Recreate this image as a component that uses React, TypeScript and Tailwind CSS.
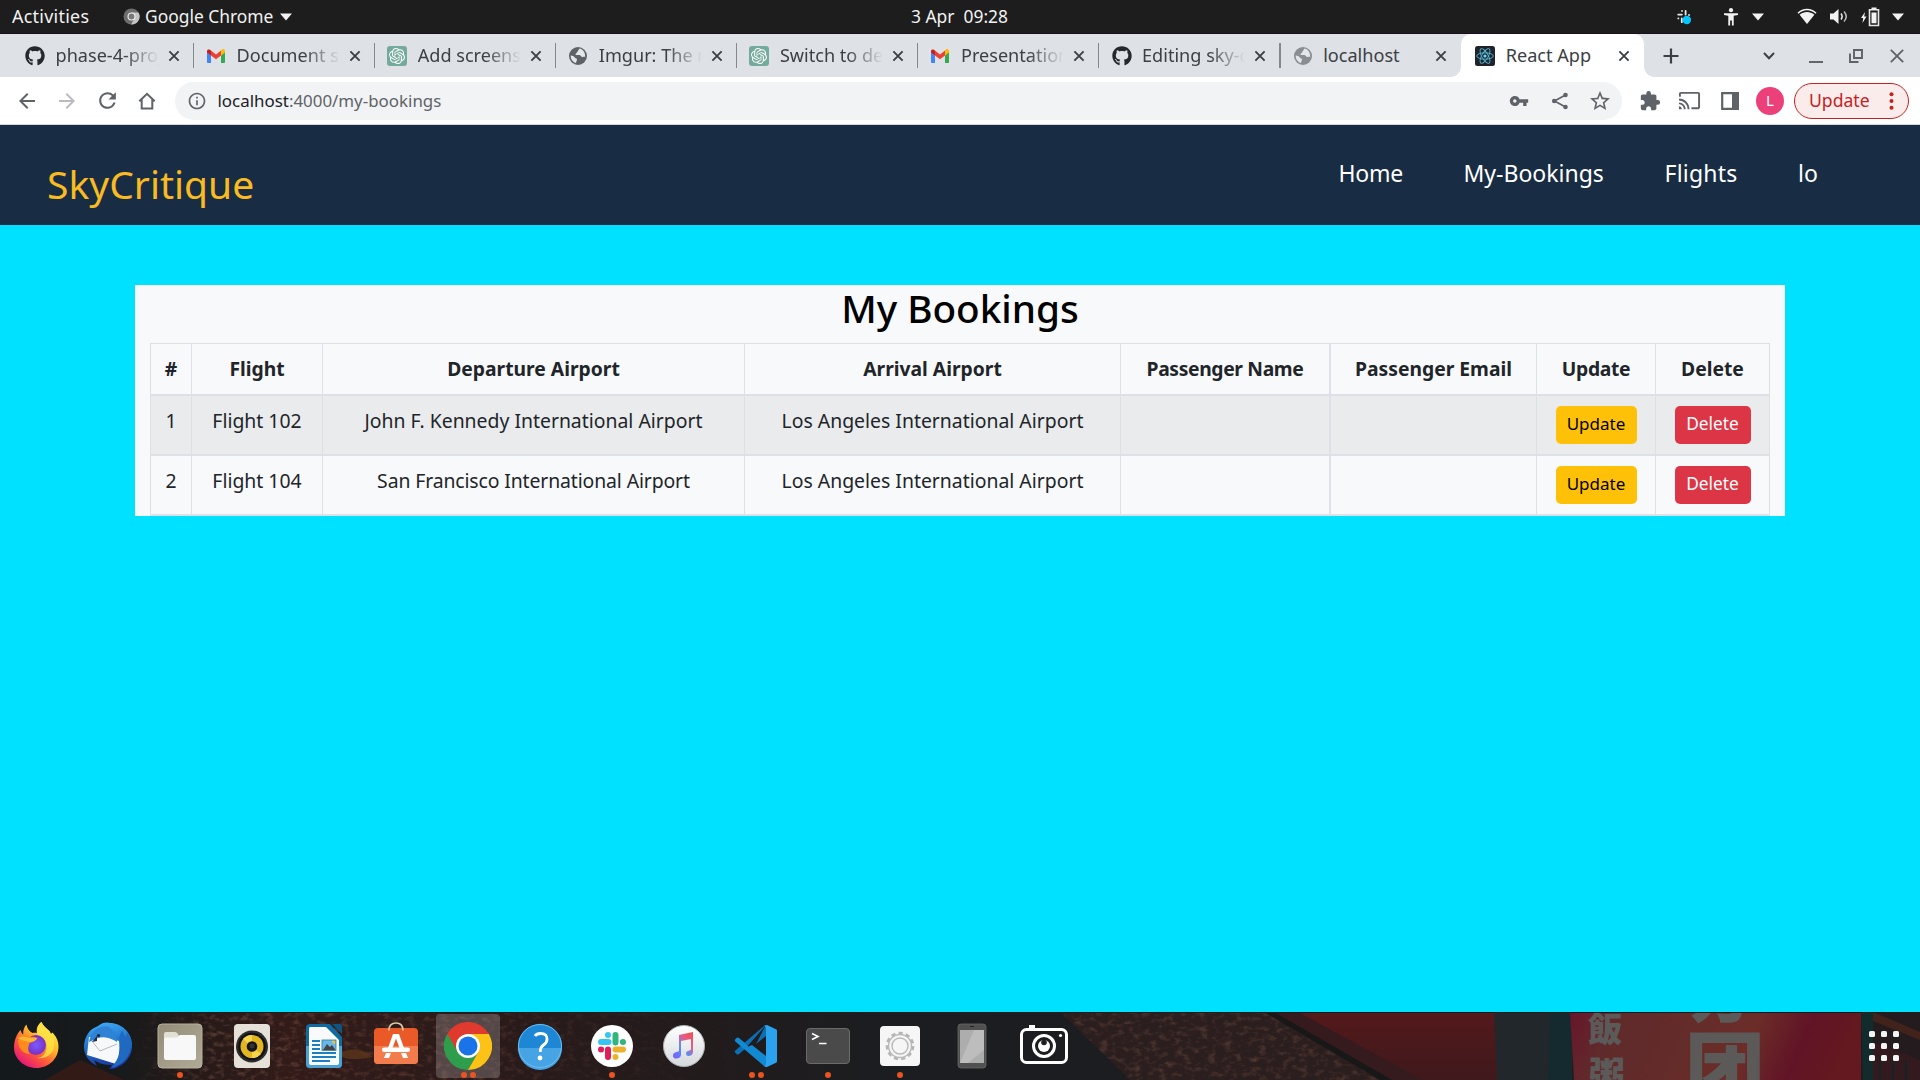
import React from 'react';
import { FaGithub } from 'react-icons/fa';
import { SiOpenai } from 'react-icons/si';
import { MdVpnKey, MdStarBorder, MdExtension, MdCast, MdArrowBack, MdArrowForward, MdRefresh, MdInfoOutline, MdPublic } from 'react-icons/md';

/* ---------- small glyphs ---------- */

const Triangle = ({ className = '' }: { className?: string }) => (
  <svg className={`h-[8px] w-[12px] ${className}`} viewBox="0 0 12 8"><path d="M0 .5h12L6 7.5z" fill="#f2f2f2" /></svg>
);

const Cross = ({ className = '', w = 1.9 }: { className?: string; w?: number }) => (
  <svg className={className} viewBox="0 0 12 12"><path d="M1.4 1.4l9.2 9.2M10.6 1.4l-9.2 9.2" stroke="currentColor" strokeWidth={w} fill="none" /></svg>
);

const Gmail = () => (
  <svg className="h-[20px] w-[20px]" viewBox="0 0 20 20">
    <path d="M1 5v11.2c0 .5.4.8.8.8H5V9.200z" fill="#4285f4" />
    <path d="M19 5v11.200c0 .5-.4.800-.8.800H15V9.200z" fill="#34a853" />
    <path d="M15 4.600V9.500l4-3V5c0-1.800-2-2.500-3.200-1.500z" fill="#fbbc04" />
    <path d="M5 9.500V4.600l5 3.800 5-3.800v4.900l-5 3.700z" fill="#ea4335" />
    <path d="M1 5v1.500l4 3V4.600l-.9-.7C2.800 3 1 3.500 1 5z" fill="#c5221f" />
  </svg>
);

const OpenAi = () => (
  <span className="flex h-[20px] w-[20px] items-center justify-center rounded-[3px] bg-[#74aa9c] text-white">
    <SiOpenai className="h-[16px] w-[16px]" />
  </span>
);

const ReactLogo = () => (
  <svg className="h-[20px] w-[20px]" viewBox="0 0 20 20">
    <rect width="20" height="20" rx="2.500" fill="#20232a" />
    <g fill="none" stroke="#53b9d6" strokeWidth="0.900">
      <ellipse cx="10" cy="10" rx="8.300" ry="3.200" />
      <ellipse cx="10" cy="10" rx="8.300" ry="3.200" transform="rotate(60 10 10)" />
      <ellipse cx="10" cy="10" rx="8.300" ry="3.200" transform="rotate(120 10 10)" />
    </g>
    <circle cx="10" cy="10" r="1.600" fill="#61dafb" />
  </svg>
);

/* Grey globe that Chrome shows for pages without a favicon */
const Globe = ({ color = '#5f6368' }: { color?: string }) => (
  <svg className="h-[20px] w-[20px]" viewBox="0 0 20 20">
    <circle cx="10" cy="10" r="9" fill={color} />
    <path d="M12 2.600c-1.500.6-1.300 2-2.200 2.600-1 .6-.6 1.800-1.800 2.300-1 .5-.4 1.600.6 1.600h2.600c1.400 0 1.600 1.700 3 1.800 1 .1 1.900-.3 3-.2.100-3.900-2-7-5.200-8.100z" fill="#e4e6ea" />
    <path d="M2.700 9.500c1.800.4 3.200.6 4 1.900.6 1 2.200.7 2.300 2.100.1 1.200-.9 1.700-.9 3.500-3.200-.7-5.500-3.800-5.400-7.500z" fill="#e4e6ea" />
  </svg>
);

const Github = () => <FaGithub className="h-[20px] w-[20px] text-[#24292f]" />;

/* ---------- GNOME top bar ---------- */

const TopBar = () => (
  <header className="flex h-[34px] items-center border-b border-[#1a0f1a] bg-[#1d1d1d] text-[17.4px] text-[#f2f2f2]">
    <span className="ml-[12px] w-[111px] text-[17.900px] tracking-[0.015em]">Activities</span>
    <svg className="h-[17px] w-[17px]" viewBox="0 0 17 17">
      <circle cx="8.500" cy="8.500" r="8" fill="#6d6d6d" />
      <path d="M8.500 4.500h7a8 8 0 0 1-7.500 12l3.500-6z" fill="#c4c4c4" />
      <circle cx="8.500" cy="8.500" r="4" fill="#eee" />
      <circle cx="8.500" cy="8.500" r="2.900" fill="#777" />
    </svg>
    <span className="ml-[5px] w-[135px]">Google Chrome</span>
    <Triangle />
    <span className="ml-[619px] w-[765px] whitespace-pre">3 Apr  09:28</span>
    <svg className="h-[16px] w-[16px] shrink-0" viewBox="0 0 16 16">
      <g stroke="#e8e8e8" strokeWidth="1.800" strokeLinecap="round" transform="rotate(0)">
        <path d="M5.800 5.600H2.200M6 1.800v.1M9.600 5.600V1.800M13 6h.1M9.600 9.400h4M5.800 9.400v3.800M2.300 9.400h.1" />
      </g>
      <circle cx="10.800" cy="11" r="4.200" fill="#00c8ff" />
    </svg>
    <svg className="ml-[31px] h-[18px] w-[16px] shrink-0" viewBox="0 0 16 18">
      <circle cx="8" cy="2.200" r="2.100" fill="#f2f2f2" />
      <path d="M1 5.300h14v1.700l-4.300.8V17.500H8.900V12.500H7.100v5H5.300V7.800L1 7z" fill="#f2f2f2" />
    </svg>
    <Triangle className="ml-[13px] shrink-0" />
    <svg className="ml-[33px] h-[17px] w-[20px] shrink-0" viewBox="0 0 20 17">
      <path d="M1 5.200C6 .2 14 .2 19 5.200" stroke="#f2f2f2" strokeWidth="1.500" fill="none" />
      <path d="M2.600 6.800C7 3.200 13 3.200 17.400 6.800L10 16z" fill="#f2f2f2" />
    </svg>
    <svg className="ml-[13px] h-[17px] w-[19px] shrink-0" viewBox="0 0 19 17">
      <path d="M0 5.500h3.500L8.500 1v15L3.500 11.500H0z" fill="#f2f2f2" />
      <path d="M11 5.500q2.200 3 0 6" stroke="#f2f2f2" strokeWidth="1.500" fill="none" />
      <path d="M14 3.500q4.500 5 0 10" stroke="#bbb" strokeWidth="1.500" fill="none" />
    </svg>
    <svg className="ml-[12px] h-[20px] w-[19px] shrink-0" viewBox="0 0 19 20">
      <path d="M4 5L0 11h2.200L1.500 16 5.500 9.500H3.200z" fill="#f2f2f2" />
      <path d="M8.500 2.800h9V18.500h-9z" fill="none" stroke="#e6e6e6" strokeWidth="1.600" />
      <path d="M10.500 5.500h5v10.700h-5zM10.500 .5h5v2h-5z" fill="#f2f2f2" />
    </svg>
    <Triangle className="ml-[12px] shrink-0" />
  </header>
);

/* ---------- Chrome tab strip ---------- */

const tabs = [
  { icon: <Github />, title: 'phase-4-proj' },
  { icon: <Gmail />, title: 'Document su' },
  { icon: <OpenAi />, title: 'Add screensh' },
  { icon: <Globe />, title: 'Imgur: The m' },
  { icon: <OpenAi />, title: 'Switch to des' },
  { icon: <Gmail />, title: 'Presentation' },
  { icon: <Github />, title: 'Editing sky-c' },
  { icon: <Globe color="#8a8d91" />, title: 'localhost' },
];

const TabStrip = () => (
  <div className="flex h-[43px] items-center bg-[#dee1e6] pl-[12.500px] text-[18.100px] text-[#3c4043]">
    {tabs.map((t, i) => (
      <div key={i} className="flex h-full w-[181.100px] shrink-0 items-center pl-[12.500px]">
        <span className="flex w-[20px] justify-center">{t.icon}</span>
        <span className={`ml-[10.500px] w-[103px] shrink-0 overflow-hidden whitespace-nowrap ${i < 7 ? '[mask-image:linear-gradient(to_right,black_65%,transparent_100%)]' : ''}`}>{t.title}</span>
        <Cross className="ml-[9px] h-[12px] w-[12px] shrink-0" />
        {i < 7 && <span className="ml-[13px] h-[25px] w-[1.500px] shrink-0 bg-[#84888d]" />}
      </div>
    ))}
    <div className="relative flex h-full w-[183px] shrink-0 items-center rounded-t-[10px] bg-white pl-[14px]">
      <span className="absolute bottom-0 -left-[10px] h-[10px] w-[10px] bg-[radial-gradient(circle_at_0_0,transparent_9.500px,white_10px)]" />
      <span className="absolute -right-[10px] bottom-0 h-[10px] w-[10px] bg-[radial-gradient(circle_at_100%_0,transparent_9.500px,white_10px)]" />
      <ReactLogo />
      <span className="ml-[10.500px] w-[103px]">React App</span>
      <Cross className="ml-[9px] h-[12px] w-[12px]" />
    </div>
    <svg className="ml-[18.500px] h-[16px] w-[16px]" viewBox="0 0 16 16"><path d="M8 .5v15M.5 8h15" stroke="#3c4043" strokeWidth="2.200" /></svg>
    <svg className="ml-[84px] h-[8px] w-[12px]" viewBox="0 0 12 8"><path d="M1 1l5 5.200L11 1" stroke="#3c4043" strokeWidth="2" fill="none" /></svg>
    <span className="mt-[12px] ml-[34px] h-[2px] w-[14px] bg-[#63666a]" />
    <svg className="ml-[26px] h-[14px] w-[14px]" viewBox="0 0 14 14"><path d="M5 1h8v8H5zM1 4.500V13h8.500" stroke="#5f6368" strokeWidth="1.900" fill="none" /></svg>
    <Cross className="ml-[26px] h-[16px] w-[16px] text-[#5f6368]" w={1.400} />
  </div>
);

/* ---------- Chrome toolbar ---------- */

const Toolbar = () => (
  <div className="flex h-[48px] items-center border-b border-[#d5d7da] bg-white text-[#5f6368]">
    <MdArrowBack className="ml-[15px] h-[24px] w-[24px]" />
    <MdArrowForward className="ml-[16px] h-[24px] w-[24px] text-[#b9bbbe]" />
    <MdRefresh className="ml-[16px] h-[25px] w-[25px]" />
    <svg className="ml-[18px] h-[18px] w-[18px]" viewBox="0 0 18 18"><path d="M1.300 9.300L9 1.800l7.700 7.500M3.700 7.500v9h10.600v-9" stroke="currentColor" strokeWidth="2" fill="none" /></svg>
    <div className="ml-[19px] flex h-[38px] w-[1447px] shrink-0 items-center rounded-full bg-[#f1f3f4] pl-[12px]">
      <MdInfoOutline className="h-[20px] w-[20px] shrink-0" />
      <span className="ml-[10.500px] text-[16.900px] text-[#5f6368]"><span className="text-[#202124]">localhost</span>:4000/my-bookings</span>
      <MdVpnKey className="ml-auto h-[20px] w-[20px] shrink-0" />
      <svg className="ml-[22px] h-[18px] w-[18px]" viewBox="0 0 18 18">
        <path d="M14.500 3L3.500 9l11 6" stroke="currentColor" strokeWidth="1.700" fill="none" />
        <circle cx="14.500" cy="3" r="2.300" fill="currentColor" /><circle cx="3.200" cy="9" r="2.300" fill="currentColor" /><circle cx="14.500" cy="15" r="2.300" fill="currentColor" />
      </svg>
      <MdStarBorder className="mr-[10px] ml-[19px] h-[24px] w-[24px]" />
    </div>
    <MdExtension className="ml-[17px] h-[22px] w-[22px]" />
    <MdCast className="ml-[17px] h-[23px] w-[23px]" />
    <svg className="ml-[20px] h-[18px] w-[18px]" viewBox="0 0 18 18"><path d="M1.200 1.200h15.600v15.600H1.200z" stroke="currentColor" strokeWidth="2.200" fill="none" /><path d="M11 0h7v18h-7z" fill="currentColor" /></svg>
    <span className="ml-[17px] flex h-[28px] w-[28px] items-center justify-center rounded-full bg-[#ec407a] text-[15px] text-white">L</span>
    <span className="ml-[10px] flex h-[36px] w-[115px] items-center rounded-full border-[1.500px] border-[#c5221f] bg-[#faeceb] pl-[14px] text-[17.600px] text-[#c5221f]">
      Update
      <svg className="ml-[19px] h-[18px] w-[5px]" viewBox="0 0 5 18"><g fill="#c5221f"><circle cx="2.500" cy="2.300" r="2" /><circle cx="2.500" cy="9" r="2" /><circle cx="2.500" cy="15.700" r="2" /></g></svg>
    </span>
  </div>
);

/* ---------- Web page ---------- */

const NavBar = () => (
  <nav className="flex h-[100px] justify-between bg-[#182d44] pr-[102px] pl-[47px]">
    <span className="mt-[17px] h-[83px] text-[39px] leading-[84px] text-[#f9ba22]">SkyCritique</span>
    <div className="flex h-[96px] items-center text-[23px] text-white">
      <span className="w-[125px] tracking-[-0.010em]">Home</span>
      <span className="w-[201px]">My-Bookings</span>
      <span className="w-[133.500px] tracking-[0.010em]">Flights</span>
      <span className="w-[20px]">lo</span>
    </div>
  </nav>
);

const headings = ['#', 'Flight', 'Departure Airport', 'Arrival Airport', 'Passenger Name', 'Passenger Email', 'Update', 'Delete'];
const columns = ['w-[41px]', 'w-[131px]', 'w-[422px]', 'w-[376px]', 'w-[209px]', 'w-[207px]', 'w-[119px]', 'w-[115px]'];
const bookings = [
  ['1', 'Flight 102', 'John F. Kennedy International Airport', 'Los Angeles International Airport', '', ''],
  ['2', 'Flight 104', 'San Francisco International Airport', 'Los Angeles International Airport', '', ''],
];
const side = (i: number) => (i === 5 ? 'border-l-2' : i === 7 ? 'border-x' : 'border-l');

const Bookings = () => (
  <main className="flex h-[787px] justify-center bg-[#00e1ff] pt-[60px]">
    <section className="h-[231px] w-[1650px] bg-[#f8f9fb] px-[15px]">
      <h1 className="h-[58px] text-center text-[38.700px] leading-[47px] font-medium text-black">My Bookings</h1>
      <table className="w-[1620px] table-fixed border-separate border-spacing-0 text-center text-[#212529]">
        <colgroup>{columns.map((c, i) => <col key={i} className={c} />)}</colgroup>
        <thead>
          <tr>
            {headings.map((h, i) => (
              <th key={i} className={`h-[53px] border-t border-b-2 border-[#dee0e7] text-[19.300px] font-bold ${side(i)} ${h === 'Passenger Name' ? 'tracking-[-0.018em]' : ''} ${h === 'Update' ? 'tracking-[-0.018em]' : ''}`}>{h}</th>
            ))}
          </tr>
        </thead>
        <tbody>
          {bookings.map((b, r) => (
            <tr key={r} className={r === 0 ? 'bg-[#eaebed]' : ''}>
              {b.map((v, i) => (
                <td key={i} className={`h-[60px] border-b-2 border-[#dee0e7] pb-[9px] text-[19.400px] whitespace-nowrap ${side(i)} ${v.startsWith('San') ? 'tracking-[-0.006em]' : ''}`}>{v}</td>
              ))}
              <td className="h-[60px] border-b-2 border-l border-[#dee0e7]">
                <button className="mx-auto block h-[38px] w-[81px] rounded-[5px] bg-[#ffc107] pb-[3px] text-[17px] text-black">Update</button>
              </td>
              <td className="h-[60px] border-x border-b-2 border-[#dee0e7]">
                <button className="mx-auto block h-[38px] w-[76px] rounded-[5px] bg-[#dc3545] pb-[3px] text-[17.300px] text-white">Delete</button>
              </td>
            </tr>
          ))}
        </tbody>
      </table>
    </section>
  </main>
);

/* ---------- Dock ---------- */

const Firefox = () => (
  <>
    <defs>
      <linearGradient id="ffA" x1="0.850" y1="0.100" x2="0.200" y2="0.950"><stop offset="0" stopColor="#fff04a" /><stop offset=".35" stopColor="#ffb42a" /><stop offset=".65" stopColor="#ff5a36" /><stop offset="1" stopColor="#e5127f" /></linearGradient>
      <radialGradient id="ffB"><stop offset="0" stopColor="#7a5cff" /><stop offset="1" stopColor="#7a2fc4" /></radialGradient>
    </defs>
    <path d="M8.700 8c.3 2 1.300 3.500 2.500 4.500C11 8.500 12 5 14.500 2.500c.6 4 2.500 6.500 6 8.500 1.500-.5 3.500-.5 4.500 0-1-4.500 1-9 4.500-11C31 3.500 33.500 5.500 37 8.500c1 1 1.500 2.500 1.500 3.500 1-.5 1.500-1 2-1.500 3.500 4 6 8 6 14C46.500 37 36.500 46 24.500 46S2 37 2 25.500C2 18.500 4.500 12 8.700 8z" fill="url(#ffA)" />
    <path d="M29.500 0C31 3.500 33.500 5.500 37 9c5 5 6.500 11 4.500 18-2.500 7-10 10-16 9 7-1 10-7 9-14-1-5-5-7-8.500-8.500C23.500 9 26 3 29.500 0z" fill="#ffe345" opacity=".8" />
    <circle cx="24" cy="23" r="10" fill="url(#ffB)" />
    <path d="M6 18c3-4 8-5 11-3 3-.5 6 0 8.500 1-2 3-4.500 4-8 5-1.500 5-2 7 .5 11-8 0-12-7-12-14z" fill="#ff8b1d" />
    <path d="M5 16c4-2 8-2 12 0l8.500.5c-2.500 2.500-5 3.500-8.500 3.500-4-1-8-2-12-4z" fill="#ffbd36" opacity=".85" />
  </>
);

const Thunderbird = () => (
  <>
    <defs><linearGradient id="tb" x1="0.300" y1="0" x2="0.500" y2="1"><stop offset="0" stopColor="#3fa9f5" /><stop offset=".5" stopColor="#1e6fc8" /><stop offset="1" stopColor="#1a2f9a" /></linearGradient></defs>
    <path d="M14 4C18 0 24 0 26 1c11 0 21 9 22 20 1 10-5 20-14 24-3 2-6 2-9 2l3-4c-8 0-14-2-18-5l3 6C5 40 0 33 0 25 0 17 4 9 10 6z" fill="url(#tb)" />
    <path d="M5 15l-2 18 29 9c3-7 4-14 3-23L22 15z" fill="#f7f8fa" />
    <path d="M7 18l9 11 17-7" stroke="#b5bac2" strokeWidth="1" fill="none" />
    <path d="M5 20C7 9 15 3 25 5c5 4 8 8 8 15-6-4-13-6-19-4z" fill="#2f83d4" />
    <path d="M35 16c4 8 1 20-8 30 12-2 20-12 20-24 0-5-2-9-4-12 0 3-1 4-2 5l-3-7z" fill="#2069c0" />
    <path d="M13 14l-5 6 5-1z" fill="#222f45" /><circle cx="14.500" cy="13.500" r="1.600" fill="#17233f" />
  </>
);

const Files = () => (
  <>
    <defs><linearGradient id="fl" x1="0" y1="0" x2="1" y2="1"><stop offset="0" stopColor="#948c76" /><stop offset="1" stopColor="#b0aa98" /></linearGradient></defs>
    <rect x="2" y="2" width="44" height="44" rx="4" fill="url(#fl)" stroke="#b7b09e" strokeWidth="1" />
    <path d="M8 12q0-2 2-2h9q1.500 0 2.500 1.500L23 14v5H8z" fill="#e2dfd5" />
    <path d="M8 17.500q0-2 2-2h11l3-2.500h14q2 0 2 2v21q0 2-2 2H10q-2 0-2-2z" fill="#f8f8f8" />
  </>
);

const Rhythmbox = () => (
  <>
    <rect x="6" y="2" width="36" height="44" rx="4" fill="#e6e1d8" />
    <circle cx="24" cy="24.500" r="16" fill="#2b2b2b" /><circle cx="24" cy="24.500" r="13.800" fill="#111" />
    <circle cx="24" cy="24.500" r="11.500" fill="#e2b522" /><path d="M24 24.500L15 17a11.500 11.500 0 0 1 9-4zM24 24.500l9 7.500a11.500 11.500 0 0 1-9 4z" fill="#f7d44c" />
    <circle cx="24" cy="24.500" r="5.300" fill="#151515" /><circle cx="24" cy="24" r="2.500" fill="#333" />
  </>
);

const Writer = () => (
  <>
    <path d="M10 2h20l12 13v27q0 4-4 4H10q-4 0-4-4V6q0-4 4-4z" fill="#0f6a9f" />
    <path d="M6 24h36v18q0 4-4 4H10q-4 0-4-4z" fill="#4ba3d3" />
    <path d="M32 2h8q2 0 2 2v8z" fill="#0d5580" />
    <path d="M10 5h16l13 13v23q0 2-2 2H11q-2 0-2-2V7q0-2 1-2z" fill="#f9fafb" />
    <path d="M12 19h8M12 23h8M12 27h8M12 31h24M12 35h24M12 39h18" stroke="#1b7fc0" strokeWidth="2" />
    <rect x="22" y="18" width="14" height="10.500" fill="#68b7ea" /><path d="M23 28l4-6 3 3 2-2 3.500 5z" fill="#444" /><path d="M32 18.500h3.500V22Q32 22 32 18.500z" fill="#f5c52c" />
    <rect x="22" y="18" width="14" height="10.500" fill="none" stroke="#3478a0" strokeWidth=".8" />
  </>
);

const Software = () => (
  <>
    <rect x="2" y="6" width="44" height="36" rx="4" fill="#e95a28" /><path d="M2 24h44v14q0 4-4 4H6q-4 0-4-4z" fill="#f27c4c" />
    <path d="M17 8.500Q17 1 24 1t7 7.500" fill="none" stroke="#d9c9a8" strokeWidth="1.700" />
    <path d="M21 12h6l5 14h-4.500L24 16.500 20.500 26H16z" fill="#fff" />
    <rect x="10" y="25.500" width="28" height="4.500" rx="2.200" fill="#fff" />
    <path d="M14 31h5l-2 5h-5zM29 31h5l2 5h-5z" fill="#fff" />
  </>
);

const Chrome = () => (
  <>
    <path d="M24 24L3.200 12A24 24 0 0 1 44.800 12z" fill="#e03a2e" />
    <path d="M24 24L3.200 12A24 24 0 0 0 24 48L34.400 30z" fill="#2f9e4c" />
    <path d="M24 12h20.800A24 24 0 0 1 24 48l10.400-18z" fill="#fcc216" />
    <path d="M3.200 12L13.600 30 24 12z" fill="#e03a2e" /><path d="M3.200 12L13.600 30 24 36 4 30z" fill="#2f9e4c" />
    <circle cx="24" cy="24" r="12" fill="#fff" /><circle cx="24" cy="24" r="9.500" fill="#1a73e8" />
  </>
);

const Help = () => (
  <>
    <circle cx="24" cy="24" r="22" fill="#1d87d6" /><path d="M2 26h44a22 22 0 0 1-44 0z" fill="#46a4e4" />
    <circle cx="24" cy="24" r="21.500" fill="none" stroke="#6cbcf0" strokeWidth="1" />
    <path d="M19 14q1.500-2.500 5.500-2.500 7 0 6.500 6 0 3-3.500 5.500-3.500 2.500-3.200 7" fill="none" stroke="#fff" strokeWidth="2.800" /><circle cx="24" cy="36" r="2.400" fill="#fff" />
  </>
);

const Slack = () => (
  <>
    <circle cx="24" cy="24" r="21" fill="#fff" />
    <g strokeWidth="6" strokeLinecap="round" fill="none">
      <path d="M13 20h7.500M20 13v.1" stroke="#36c5f0" /><path d="M27.500 13v7.500M35 20h-.1" stroke="#2eb67d" />
      <path d="M35 27.500h-7.500M27.500 35v-.1" stroke="#ecb22e" /><path d="M20 35v-7.500M13 27.500h.1" stroke="#e01e5a" />
    </g>
  </>
);

const Music = () => (
  <>
    <defs><linearGradient id="mu" x1="0" y1="1" x2="0.800" y2="0"><stop offset="0" stopColor="#7a5cff" /><stop offset=".45" stopColor="#5a8ff2" /><stop offset=".75" stopColor="#e85a86" /><stop offset="1" stopColor="#f0525a" /></linearGradient>
      <linearGradient id="mb" x1="0" y1="0" x2="0" y2="1"><stop offset="0" stopColor="#fff" /><stop offset="1" stopColor="#d5d9dc" /></linearGradient></defs>
    <circle cx="24" cy="24" r="20.500" fill="url(#mb)" stroke="#aeb1b5" strokeWidth="1" />
    <path d="M19 13l14-3v19.500q0 4-4 4.500-3 .3-3-2.500 0-2.500 3.500-3 1.500-.3 1.500-1.500V17l-10 2v13.500q0 3.500-4 4-4 .3-4-2.800 0-3 3.500-3.700 2.500-.4 2.500-1.500z" fill="url(#mu)" />
  </>
);

const VsCode = () => (
  <>
    <path d="M34 3L13 27 7 32q-1.300 1-2.500 0L3.300 30.700q-1-1.200 0-2.200L32 4zM34 3v11L24 22z" fill="#0b6fb3" />
    <path d="M34 45L13 21 7 16q-1.300-1-2.500 0L3.300 17.300q-1 1.200 0 2.200L32 44zM34 45V34L20 23l-7 3z" fill="#1389d2" />
    <path d="M32.500 44.500Q34 43.500 34 41V7q0-2.500-1.500-3.500Q33.500 3 35 3l9.500 4.500q.5.300.5 1.500v30q0 1-.5 1.500L35 45q-1.500.3-2.500-.5z" fill="#2aa2ee" />
  </>
);

const Terminal = () => (
  <>
    <rect x="2.500" y="6.500" width="43" height="35" rx="3.500" fill="#4a4a4a" stroke="#6b6b6b" />
    <path d="M8 11.500l6 3-6 3M15 21.500h7.500" stroke="#fff" strokeWidth="1.600" fill="none" />
  </>
);

const Settings = () => (
  <>
    <rect x="4" y="4" width="40" height="40" rx="4" fill="#f6f6f6" />
    <circle cx="24" cy="24" r="13" fill="none" stroke="#b5b5b5" strokeWidth="2.600" strokeDasharray="4.200 3.225" />
    <circle cx="24" cy="24" r="11.500" fill="#f6f6f6" stroke="#b9b9b9" strokeWidth="1.400" />
    <circle cx="24" cy="24" r="8" fill="none" stroke="#b9b9b9" strokeWidth="1.400" />
  </>
);

const Phone = () => (
  <>
    <rect x="10" y="2" width="28" height="44" rx="3" fill="#505050" stroke="#686868" strokeWidth=".8" />
    <rect x="12" y="8" width="24" height="33" fill="#adadad" /><path d="M26 8h10v20L20 41h-8z" fill="#bdbdbd" /><path d="M22 4.500h4" stroke="#222" />
  </>
);

const Camera = () => (
  <>
    <rect x="1.500" y="7.500" width="45" height="33" rx="5" fill="none" stroke="#fff" strokeWidth="3" />
    <rect x="9" y="3" width="6" height="4" fill="#fff" /><circle cx="40.500" cy="13.500" r="1.600" fill="#fff" />
    <circle cx="24" cy="24" r="10.500" fill="none" stroke="#fff" strokeWidth="3" />
    <circle cx="24" cy="24" r="6" fill="#fff" /><circle cx="24" cy="20.500" r="2.800" fill="#1d1f22" />
  </>
);

const apps: [React.ReactNode, number][] = [
  [<Firefox />, 0], [<Thunderbird />, 0], [<Files />, 1], [<Rhythmbox />, 0], [<Writer />, 0], [<Software />, 0], [<Chrome />, 2], [<Help />, 0],
  [<Slack />, 1], [<Music />, 0], [<VsCode />, 2], [<Terminal />, 1], [<Settings />, 1], [<Phone />, 0], [<Camera />, 0],
];

const Wallpaper = () => (
  <svg className="absolute inset-0 h-[68px] w-[1920px]" viewBox="0 0 1920 68">
    <defs>
      <linearGradient id="base" x1="0" x2="1" y1="0" y2="0">
        <stop offset="0" stopColor="#14191c" /><stop offset=".06" stopColor="#171a1b" /><stop offset=".1" stopColor="#251a19" /><stop offset=".15" stopColor="#321b19" />
        <stop offset=".26" stopColor="#2a1a1a" /><stop offset=".36" stopColor="#221b1c" /><stop offset=".45" stopColor="#1c1d20" /><stop offset="1" stopColor="#1c1d20" />
      </linearGradient>
      <linearGradient id="sign" x1="0" x2="1" y1="0" y2="0.100">
        <stop offset="0" stopColor="#68152a" /><stop offset=".15" stopColor="#602a2c" /><stop offset=".4" stopColor="#632c2a" /><stop offset=".65" stopColor="#6c2d28" /><stop offset=".83" stopColor="#611426" /><stop offset="1" stopColor="#64181f" />
      </linearGradient>
      <linearGradient id="roof" x1="0" x2="0" y1="0" y2="1"><stop offset="0" stopColor="#54191b" /><stop offset="1" stopColor="#3f191c" /></linearGradient>
      <linearGradient id="fade" x1="0" x2="1" y1="0" y2="0"><stop offset="0" stopColor="#000" /><stop offset=".15" stopColor="#fff" /><stop offset=".6" stopColor="#888" /><stop offset="1" stopColor="#000" /></linearGradient>
      <mask id="leaves"><rect x="130" width="600" height="68" fill="url(#fade)" /></mask>
      <filter id="grain" x="0" y="0" width="1" height="1"><feTurbulence type="fractalNoise" baseFrequency="0.120 0.200" numOctaves="3" seed="4" /><feColorMatrix values="0 0 0 0 .36  0 0 0 0 .16  0 0 0 0 .1  2.200 0 0 0 -1.050" /></filter>
    </defs>
    <rect width="1920" height="68" fill="url(#base)" />
    <path d="M1060 0h260l160 68h-350z" fill="#2b1e1e" />
    <path d="M45 68L80 48l45 20z" fill="#321a17" />
    <g mask="url(#leaves)"><rect x="130" width="600" height="68" filter="url(#grain)" opacity=".5" /></g>
    <g opacity=".35"><clipPath id="cp"><path d="M1060 0h210l120 68h-260z" /></clipPath><g clipPath="url(#cp)"><rect x="1060" width="340" height="68" filter="url(#grain)" /></g></g>
    <path d="M340 41q12-7 28 0l4 4q-20 5-32-1z" fill="#5b351a" opacity=".8" />
    <path d="M1270 0h225l3 68h-105z" fill="url(#roof)" />
    <path d="M1270 0h28l125 68h-42z" fill="#351b1e" /><path d="M1264 0h10l118 68h-12z" fill="#181819" />
    <path d="M1494 0h60v68h-57z" fill="#22272c" /><path d="M1550 0h22v68h-24z" fill="#142a2e" />
    <path d="M1570 0h291v68h-287z" fill="url(#sign)" />
    <path d="M1861 0h14v68h-12z" fill="#122b2d" /><path d="M1873 0h47v68h-47z" fill="#231b1e" />
    <path d="M1873 0l47 20v8l-47-19z" fill="#42231c" /><path d="M1873 30l47 18v20h-47z" fill="#321a1e" />
    <path d="M1880 45v23M1893 45v23M1906 48v20" stroke="#162225" strokeWidth="2" />
    <g fill="#5c5a59" fontWeight="900" fontFamily='"Noto Sans CJK JP", "Noto Sans CJK SC", sans-serif'>
      <text x="1588" y="30" fontSize="34">飯</text><text x="1589" y="76" fontSize="36">粥</text>
      <text x="1690" y="4" fontSize="64">方</text><text x="1685" y="86" fontSize="80" fontFamily='"Noto Sans CJK SC", sans-serif'>团</text>
    </g>
    <rect width="1920" height="1" fill="#151a1c" />
  </svg>
);

const Dock = () => (
  <footer className="relative h-[68px] overflow-hidden bg-[#1c1d20]">
    <Wallpaper />
    <div className="relative flex h-full">
      {apps.map(([icon, dots], i) => (
        <div key={i} className="flex h-full w-[72px] shrink-0 justify-center pt-[2px]">
          <div className={`flex h-[64px] w-[64px] flex-col items-center rounded-[4px] pt-[8px] ${i === 6 ? 'bg-white/20' : ''}`}>
            <svg className="h-[48px] w-[48px] shrink-0" viewBox="0 0 48 48">{icon}</svg>
            <div className="mt-[2px] flex gap-[3px]">
              {Array.from({ length: dots }, (_, d) => <span key={d} className="h-[6px] w-[6px] rounded-full bg-[#e95420]" />)}
            </div>
          </div>
        </div>
      ))}
      <div className="mt-[19px] mr-[21px] ml-auto grid h-[30px] w-[30px] grid-cols-3 gap-[6px]">
        {Array.from({ length: 9 }, (_, d) => <span key={d} className="h-[6px] w-[6px] rounded-[1.500px] bg-[#f4f4f4]" />)}
      </div>
    </div>
  </footer>
);

export default function App() {
  return (
    <div className="flex h-[1080px] w-[1920px] flex-col overflow-hidden font-['Noto_Sans',sans-serif]">
      <TopBar />
      <TabStrip />
      <Toolbar />
      <NavBar />
      <Bookings />
      <Dock />
    </div>
  );
}
